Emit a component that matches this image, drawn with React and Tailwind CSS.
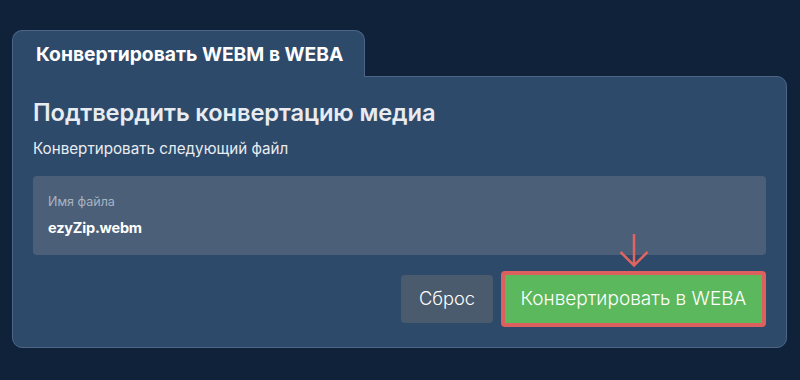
import React from "react";

export default function App() {
  return (
    <div className="w-[800px] h-[380px] bg-[#10223a] pt-[30px] pl-[12px] pr-[13px]" style={{ fontFamily: "Inter, 'Noto Sans', sans-serif" }}>
      <div className="flex">
        <div className="w-[353px] h-[47px] bg-[#2d4a6b] border border-b-0 border-[#4d6688] rounded-t-[10px] flex items-center pl-[23px] text-white font-bold text-[19.3px] relative z-10 -mb-px">
          Конвертировать WEBM в WEBA
        </div>
      </div>
      <div className="bg-[#2d4a6b] border border-[#4d6688] rounded-b-[10px] rounded-tr-[10px] h-[272px] px-[20px] pt-[20px]">
        <h1 className="text-[#e8ecf1] text-[23.7px] font-semibold leading-[32px] tracking-[-0.1px]">Подтвердить конвертацию медиа</h1>
        <p className="text-[#e8ecf1] text-[15.2px] mt-[11px] leading-[18px]">Конвертировать следующий файл</p>
        <div className="mt-[18px] bg-[#4b5f78] rounded-[4px] h-[79px] px-[15px] pt-[18px]">
          <div className="text-[#a9b4c2] text-[12.5px] leading-[16px]">Имя файла</div>
          <div className="text-white font-bold text-[14.5px] mt-[8px] leading-[20px] tracking-[-0.2px]">ezyZip.webm</div>
        </div>
        <div className="flex justify-end items-center gap-[8px] mt-[16px]">
          <button className="bg-[#4b5b6e] text-white text-[18.3px] font-light rounded-[4px] w-[92px] h-[48px]">Сброс</button>
          <div className="relative">
            <svg className="absolute left-1/2 -translate-x-1/2 -top-[40px]" width="32" height="38" viewBox="0 0 32 38">
              <path d="M16 3 V35 M2.5 21 L16 34.5 L29.5 21" stroke="#e06560" strokeWidth="2.5" fill="none" />
            </svg>
            <button className="bg-[#5cb85c] text-white text-[19px] font-light rounded-[4px] border-[4px] border-[#dc605d] w-[265px] h-[56px]">Конвертировать в WEBA</button>
          </div>
        </div>
      </div>
    </div>
  );
}
